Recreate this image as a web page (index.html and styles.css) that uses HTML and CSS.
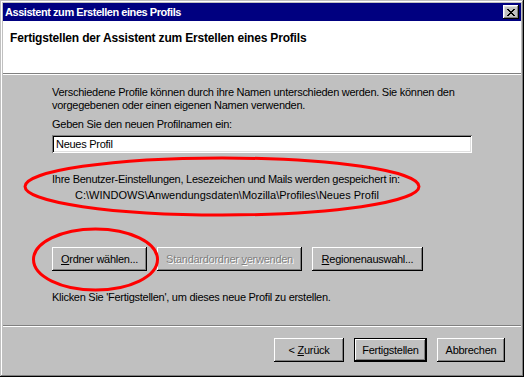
FILE: index.html
```html
<html>
<head>
   <meta charset="utf-8">
   <link rel="stylesheet" href="styles.css">
</head>
<body>
   <div class="window">
      <div class="titlebar">
         <span class="title">Assistent zum Erstellen eines Profils</span>
         <button class="close-btn">
            <svg width="8" height="7" viewBox="0 0 8 7">
               <path d="M0 0h2v1h1v1h2v-1h1v-1h2v1h-1v1h-1v1h-1v1h1v1h1v1h1v1h-2v-1h-1v-1h-2v1h-1v1h-2v-1h1v-1h1v-1h1v-1h-1v-1h-1v-1h-1z" fill="#000"/>
            </svg>
         </button>
      </div>
      <div class="client">
         <div class="header">
            <div class="header-title">Fertigstellen der Assistent zum Erstellen eines Profils</div>
         </div>
         <div class="separator"></div>
         <div class="page">
            <p class="intro">Verschiedene Profile können durch ihre Namen unterschieden werden. Sie können den<br>vorgegebenen oder einen eigenen Namen verwenden.</p>
            <p class="label">Geben Sie den neuen Profilnamen ein:</p>
            <input class="name-input" type="text" value="Neues Profil">
            <p class="store">Ihre Benutzer-Einstellungen, Lesezeichen und Mails werden gespeichert in:</p>
            <p class="path">C:\WINDOWS\Anwendungsdaten\Mozilla\Profiles\Neues Profil</p>
            <div class="folder-buttons">
               <button class="btn btn-folder"><u>O</u>rdner wählen...</button>
               <button class="btn btn-default-folder" disabled>Standardordner <u>v</u>erwenden</button>
               <button class="btn btn-region"><u>R</u>egionenauswahl...</button>
            </div>
            <p class="hint">Klicken Sie 'Fertigstellen', um dieses neue Profil zu erstellen.</p>
         </div>
         <div class="separator"></div>
         <div class="footer">
            <button class="btn btn-back">&lt; <u>Z</u>urück</button>
            <button class="btn btn-finish">Fertigstellen</button>
            <button class="btn btn-cancel">Abbrechen</button>
         </div>
      </div>
      <!-- red marker circles drawn over the dialog -->
      <svg class="marks" width="524" height="377">
         <ellipse cx="222" cy="186.5" rx="197" ry="28.5" fill="none" stroke="#ff0000" stroke-width="3"/>
         <ellipse cx="95.5" cy="259.5" rx="62" ry="30.5" fill="none" stroke="#ff0000" stroke-width="3"/>
      </svg>
   </div>
</body>
</html>
```

FILE: styles.css
```css
body {
   margin: 0;
   background-color: #c0c0c0;
}
.window {
   position: relative;
   width: 524px;
   height: 377px;
   box-sizing: border-box;
   padding: 3px;
   display: flex;
   flex-direction: column;
   background-color: #c0c0c0;
   box-shadow: inset -1px -1px #000, inset 1px 1px #c0c0c0, inset -2px -2px #808080, inset 2px 2px #fff;
   font-family: "Liberation Sans", Arial, sans-serif;
   font-size: 11px;
   letter-spacing: -0.27px;
   color: #000;
}
.titlebar {
   height: 18px;
   flex: none;
   display: flex;
   align-items: center;
   justify-content: space-between;
   background-color: #000080;
   padding: 0 2px 0 2px;
}
.title {
   color: #fff;
   font-weight: bold;
   font-size: 11px;
   letter-spacing: -0.45px;
}
.close-btn {
   width: 16px;
   height: 14px;
   padding: 0;
   border: 0;
   display: flex;
   align-items: center;
   justify-content: center;
   background-color: #c0c0c0;
   box-shadow: inset -1px -1px #000, inset 1px 1px #fff, inset -2px -2px #808080, inset 2px 2px #dfdfdf;
}
.client {
   flex: 1;
   display: flex;
   flex-direction: column;
}
.header {
   height: 52px;
   flex: none;
   background-color: #fff;
   padding: 10px 0 0 7px;
   box-sizing: border-box;
}
.header-title {
   font-weight: bold;
   font-size: 12px;
   letter-spacing: -0.18px;
}
.separator {
   flex: none;
   height: 0;
   border-top: 1px solid #808080;
   border-bottom: 1px solid #fff;
}
.page {
   flex: 1;
   padding: 11px 0 0 49px;
   line-height: 13px;
}
.page p {
   margin: 0;
}
.label {
   margin-top: 6px !important;
}
.name-input {
   display: block;
   margin-top: 4px;
   width: 420px;
   height: 18px;
   box-sizing: border-box;
   border: 0;
   padding: 0 0 0 4px;
   background-color: #fff;
   font-family: "Liberation Sans", Arial, sans-serif;
   font-size: 11px;
   letter-spacing: -0.27px;
   color: #000;
   box-shadow: inset 1px 1px #808080, inset -1px -1px #fff, inset 2px 2px #000, inset -2px -2px #dfdfdf;
}
.store {
   margin-top: 20px !important;
}
.path {
   margin-top: 3px !important;
   padding-left: 23px;
   letter-spacing: 0;
}
.folder-buttons {
   display: flex;
   gap: 10px;
   margin-top: 45px;
}
.hint {
   margin-top: 20px !important;
}
.btn {
   height: 24px;
   padding: 0;
   border: 0;
   background-color: #c0c0c0;
   font-family: "Liberation Sans", Arial, sans-serif;
   font-size: 11px;
   letter-spacing: -0.27px;
   color: #000;
   box-shadow: inset -1px -1px #000, inset 1px 1px #fff, inset -2px -2px #808080, inset 2px 2px #c0c0c0;
}
.btn-folder {
   width: 95px;
}
.btn-default-folder {
   width: 145px;
   color: #808080;
   text-shadow: 1px 1px #fff;
}
.btn-region {
   width: 111px;
}
.footer {
   flex: none;
   height: 47px;
   box-sizing: border-box;
   display: flex;
   justify-content: flex-end;
   gap: 10px;
   padding: 11px 16px 0 0;
}
.btn-back {
   width: 70px;
}
.btn-finish {
   width: 73px;
   box-shadow: inset -1px -1px #000, inset 1px 1px #000, inset -2px -2px #000, inset 2px 2px #fff, inset -3px -3px #808080;
}
.btn-cancel {
   width: 68px;
}
.marks {
   position: absolute;
   left: 0;
   top: 0;
   pointer-events: none;
}
```
